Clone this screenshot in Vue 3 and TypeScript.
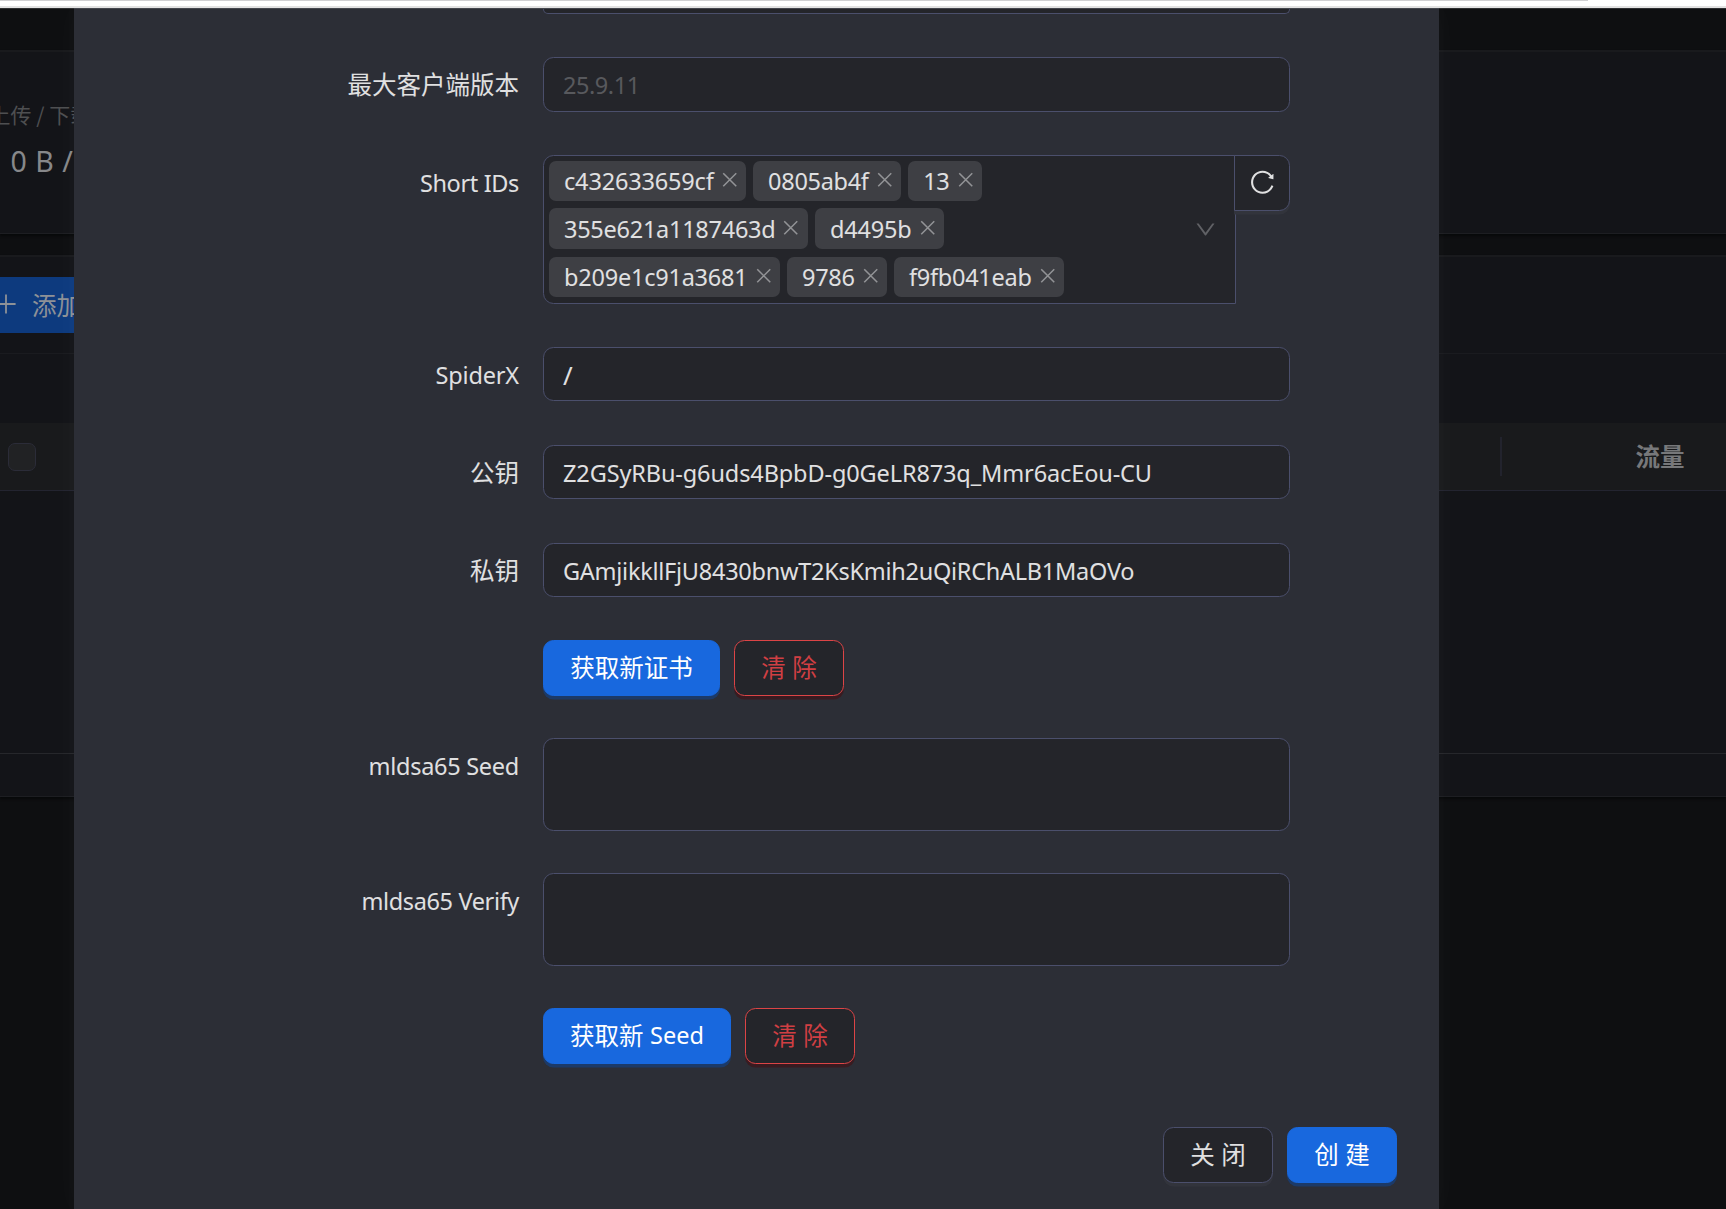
<script setup lang="ts">
interface Tag {
  text: string
  spacing: number
}

const tagRows: Tag[][] = [
  [
    { text: 'c432633659cf', spacing: -0.17 },
    { text: '0805ab4f', spacing: -0.3 },
    { text: '13', spacing: -0.2 },
  ],
  [
    { text: '355e621a1187463d', spacing: -0.26 },
    { text: 'd4495b', spacing: -0.19 },
  ],
  [
    { text: 'b209e1c91a3681', spacing: -0.22 },
    { text: '9786', spacing: -0.32 },
    { text: 'f9fb041eab', spacing: -0.27 },
  ],
]

const publicKey = 'Z2GSyRBu-g6uds4BpbD-g0GeLR873q_Mmr6acEou-CU'
const privateKey = 'GAmjikkllFjU8430bnwT2KsKmih2uQiRChALB1MaOVo'
</script>

<template>
  <div class="page">
    <div class="strip"><div class="strip-line"></div></div>

    <div class="backdrop">
      <section class="card stats">
        <div class="stat-title cjk">上传 / 下载</div>
        <div class="stat-value">0 B / 0 B</div>
      </section>
      <section class="card list">
        <div class="toolbar">
          <div class="add">
            <svg class="plus" viewBox="0 0 24 24"><path d="M12 2.6v18.8M2.4 12h19.2" /></svg>
            <span class="cjk">添加入站</span>
          </div>
        </div>
        <div class="filters"></div>
        <div class="thead">
          <span class="check"></span>
          <span class="divider"></span>
          <span class="th cjk">流量</span>
        </div>
        <div class="tbody"></div>
        <div class="tfoot"></div>
      </section>
    </div>

    <main class="modal">
      <div class="box cut"></div>

      <div class="item first">
        <label class="cjk">最大客户端版本</label>
        <div class="box placeholder">25.9.11</div>
      </div>

      <div class="item ids">
        <label class="short">Short IDs</label>
        <div class="group">
          <div class="select">
            <div class="tags">
              <div v-for="(row, i) in tagRows" :key="i" class="tag-row">
                <span v-for="tag in row" :key="tag.text" class="tag">
                  <span :style="{ letterSpacing: tag.spacing + 'px' }">{{ tag.text }}</span>
                  <svg class="close" viewBox="0 0 18 18"><path d="M2.3 2.3l13.4 13.4M15.7 2.3L2.3 15.7" /></svg>
                </span>
              </div>
            </div>
            <svg class="down" viewBox="64 64 896 896">
              <path d="M884 256h-75c-5.1 0-9.9 2.5-12.9 6.6L512 654.2 227.9 262.6c-3-4.1-7.8-6.6-12.9-6.6h-75c-6.5 0-10.3 7.4-6.5 12.7l352.6 486.1c12.8 17.6 39 17.6 51.7 0l352.6-486.1c3.9-5.3.1-12.7-6.4-12.7z" />
            </svg>
          </div>
          <button class="reload" type="button">
            <svg viewBox="64 64 896 896">
              <path d="M909.1 209.3l-56.4 44.1C775.8 155.1 656.2 92 521.9 92 290 92 102.3 279.5 102 511.5 101.7 743.7 289.8 932 521.9 932c181.3 0 335.8-115 394.6-276.1 1.5-4.2-.7-8.9-4.9-10.3l-56.7-19.5a8 8 0 00-10.1 4.8c-1.8 5-3.8 10-5.9 14.9-17.3 41-42.1 77.8-73.7 109.4A344.77 344.77 0 01655.9 829c-42.3 17.9-87.4 27-133.8 27-46.5 0-91.5-9.1-133.8-27A341.5 341.5 0 01279 755.2a342.16 342.16 0 01-73.7-109.4c-17.9-42.4-27-87.4-27-133.9s9.1-91.5 27-133.9c17.3-41 42.1-77.8 73.7-109.4 31.6-31.6 68.4-56.4 109.3-73.8 42.3-17.9 87.4-27 133.8-27 46.5 0 91.5 9.1 133.8 27a341.5 341.5 0 01109.3 73.8c9.9 9.9 19.2 20.4 27.8 31.4l-60.2 47a8 8 0 003 14.1l175.6 43c5 1.2 9.9-2.6 9.9-7.7l.8-180.9c-.1-6.6-7.8-10.3-13-6.2z" />
            </svg>
          </button>
        </div>
      </div>

      <div class="item spider">
        <label class="spider-label">SpiderX</label>
        <div class="box low slash">/</div>
      </div>
      <div class="item key">
        <label class="cjk">公钥</label>
        <div class="box low public">{{ publicKey }}</div>
      </div>
      <div class="item key">
        <label class="cjk">私钥</label>
        <div class="box low private">{{ privateKey }}</div>
      </div>

      <div class="item actions">
        <label></label>
        <button class="btn primary w177 cjk" type="button">获取新证书</button>
        <button class="btn danger cjk" type="button">清 除</button>
      </div>

      <div class="item seed">
        <label class="tight">mldsa65 Seed</label>
        <div class="box area"></div>
      </div>
      <div class="item verify">
        <label class="tighter">mldsa65 Verify</label>
        <div class="box area"></div>
      </div>

      <div class="item actions">
        <label></label>
        <button class="btn primary w188" type="button"><span class="cjk">获取新</span><span class="latin">Seed</span></button>
        <button class="btn danger cjk" type="button">清 除</button>
      </div>

      <footer class="footer">
        <button class="btn plain cjk" type="button">关 闭</button>
        <button class="btn primary w110 cjk" type="button">创 建</button>
      </footer>
    </main>
  </div>
</template>

<style>
body {
  background: #0e0f11;
}
</style>

<style scoped>
* {
  box-sizing: border-box;
}
.page {
  position: relative;
  width: 1726px;
  height: 1209px;
  overflow: hidden;
  background: #0e0f11;
  font-family: "Noto Sans", "Noto Sans CJK SC", sans-serif;
  font-size: 23.5px;
  color: #e0e0e1;
}
.cjk {
  font-family: "Noto Sans CJK SC", "Noto Sans", sans-serif;
  font-size: 24.5px;
}
.strip {
  height: 8px;
  background: #fff;
  border-bottom: 2px solid #e3e3e3;
}
.strip-line {
  width: 1588px;
  height: 1px;
  background: #d0d0d2;
}

/* dimmed page behind the dialog */
.backdrop {
  display: flex;
  flex-direction: column;
  height: 1201px;
  padding-top: 42px;
  border-top: 1px solid #2e2f31;
}
.card {
  background: #131418;
  border-top: 2px solid #191a1d;
  border-bottom: 1px solid #1d1e22;
  box-shadow: 0 2px 2px #08090a;
}
.stats {
  height: 184px;
  margin-top: -1px;
  color: #4e4f51;
}
.stat-title {
  margin: 46px 0 0 -10.5px;
  font-size: 21px;
  line-height: 33px;
  white-space: nowrap;
}
.stat-value {
  margin: 8px 0 0 10.5px;
  font-size: 28.5px;
  line-height: 44px;
  word-spacing: 1px;
  color: #87888a;
}
.list {
  display: flex;
  flex-direction: column;
  height: 542px;
  margin-top: 21px;
}
.toolbar {
  height: 97px;
  padding-top: 20px;
  border-bottom: 1px solid #1a1b1f;
}
.add {
  display: flex;
  align-items: center;
  width: 160px;
  height: 56px;
  padding-bottom: 2px;
  background: #0d3a7e;
  color: #8d9197;
}
.add .cjk {
  margin-left: 14px;
  white-space: nowrap;
}
.plus {
  flex: none;
  width: 24px;
  height: 24px;
  margin-left: -6px;
  fill: none;
  stroke: #8d9197;
  stroke-width: 1.8;
}
.filters {
  height: 69px;
}
.thead {
  display: flex;
  align-items: center;
  height: 68px;
  background: #191a1c;
  border-bottom: 1px solid #232430;
}
.check {
  width: 28px;
  height: 28px;
  margin-left: 8px;
  background: #212224;
  border: 1px solid #2b2c38;
  border-radius: 7px;
}
.divider {
  width: 2px;
  height: 39px;
  margin-left: 1464px;
  background: #22232d;
}
.th {
  margin-left: 133.5px;
  padding-bottom: 2px;
  font-weight: 700;
  color: #77787a;
}
.tbody {
  height: 263px;
  border-bottom: 1px solid #26272b;
}
.tfoot {
  flex: 1;
}

/* dialog */
.modal {
  position: absolute;
  top: 8px;
  left: 74px;
  width: 1365px;
  height: 1201px;
  overflow: visible;
  background: #2c2e36;
  border-top: 1px solid #45474e;
  box-shadow: 0 0 28px 4px rgba(255, 255, 255, 0.022), 0 0 12px 8px rgba(255, 255, 255, 0.012);
}
.item {
  display: flex;
  align-items: flex-start;
}
label {
  width: 445px;
  margin-right: 24px;
  line-height: 56px;
  text-align: right;
  white-space: nowrap;
}
label.cjk {
  line-height: 54px;
}
label.short {
  letter-spacing: -0.36px;
}
label.spider-label {
  letter-spacing: -0.15px;
}
label.tight {
  letter-spacing: -0.28px;
}
label.tighter {
  letter-spacing: -0.36px;
}
.box {
  width: 747px;
  height: 55px;
  padding-left: 19px;
  line-height: 55px;
  background: #24252a;
  border: 1px solid #4b4f6c;
  border-radius: 10.5px;
}
.low {
  height: 54px;
  line-height: 54px;
}
.slash {
  font-size: 26px;
}
.public {
  letter-spacing: -0.12px;
}
.private {
  letter-spacing: -0.26px;
}
.area {
  height: 93px;
}
.cut {
  height: 5px;
  margin-left: 469px;
  border-top: 0;
  border-radius: 0 0 8px 8px;
}
.first {
  height: 56px;
  margin-top: 43px;
}
.placeholder {
  color: #58595d;
  letter-spacing: -0.44px;
}
.ids {
  margin-top: 42px;
}
.spider {
  height: 56px;
  margin-top: 43px;
}
.key {
  height: 56px;
  margin-top: 42px;
}
.actions {
  margin-top: 41px;
}
.seed {
  margin-top: 42px;
}
.verify {
  margin-top: 42px;
}
.verify + .actions {
  margin-top: 42px;
}
.group {
  display: flex;
  align-items: flex-start;
  width: 747px;
}
.select {
  display: flex;
  align-items: center;
  justify-content: space-between;
  width: 693px;
  height: 149px;
  padding: 0 19px 0 5px;
  background: #24252a;
  border: 1px solid #4b4f6c;
  border-radius: 10.5px 0 0 10.5px;
}
.tags {
  display: flex;
  flex-direction: column;
  align-self: flex-start;
  gap: 7px;
  padding-top: 5px;
}
.tag-row {
  display: flex;
  gap: 7px;
  height: 40px;
}
.tag-row:nth-child(2) {
  height: 41px;
}
.tag-row:nth-child(3) {
  margin-top: 1px;
}
.tag {
  display: flex;
  align-items: center;
  padding: 0 8px 0 15px;
  line-height: 40px;
  background: #3e3f44;
  border-radius: 7px;
}
.close {
  width: 17.5px;
  height: 17.5px;
  margin: -2px 0 0 7px;
  fill: none;
  stroke: #929396;
  stroke-width: 1.6;
}
.down {
  width: 21px;
  height: 21px;
  fill: #606165;
}
.reload {
  display: flex;
  align-items: center;
  justify-content: center;
  width: 56px;
  height: 56px;
  margin-left: -2px;
  padding: 0 0 1px;
  background: #24252a;
  border: 1px solid #4b4f6c;
  border-radius: 0 10.5px 10.5px 0;
  box-shadow: 0 3.5px 0 #32343c;
}
.reload svg {
  width: 24.5px;
  height: 24.5px;
  fill: #e0e0e1;
}
.btn {
  display: flex;
  align-items: center;
  justify-content: center;
  width: 110px;
  height: 56px;
  padding: 0 0 3px;
  border: 1px solid transparent;
  border-radius: 10.5px;
  white-space: nowrap;
  word-spacing: 1.2px;
}
.btn + .btn {
  margin-left: 14px;
}
.primary {
  background: #1868de;
  border-color: #1868de;
  color: #fff;
  box-shadow: 0 3.5px 0 #1c3a68;
}
.w177 {
  width: 177px;
}
.w188 {
  width: 188px;
}
.w110 {
  width: 110px;
}
.latin {
  margin-left: 6.5px;
  padding-top: 1px;
  font-family: "Noto Sans", sans-serif;
  font-size: 23.5px;
}
.danger {
  background: #24252a;
  border-color: #dc4446;
  color: #d03f43;
  box-shadow: 0 3.5px 0 #391b21;
}
.plain {
  background: #24252a;
  border-color: #4b4f6c;
  color: #e0e0e1;
  box-shadow: 0 3.5px 0 #32343c;
}
.footer {
  display: flex;
  justify-content: flex-end;
  margin-top: 63px;
  padding-right: 42px;
}
</style>
